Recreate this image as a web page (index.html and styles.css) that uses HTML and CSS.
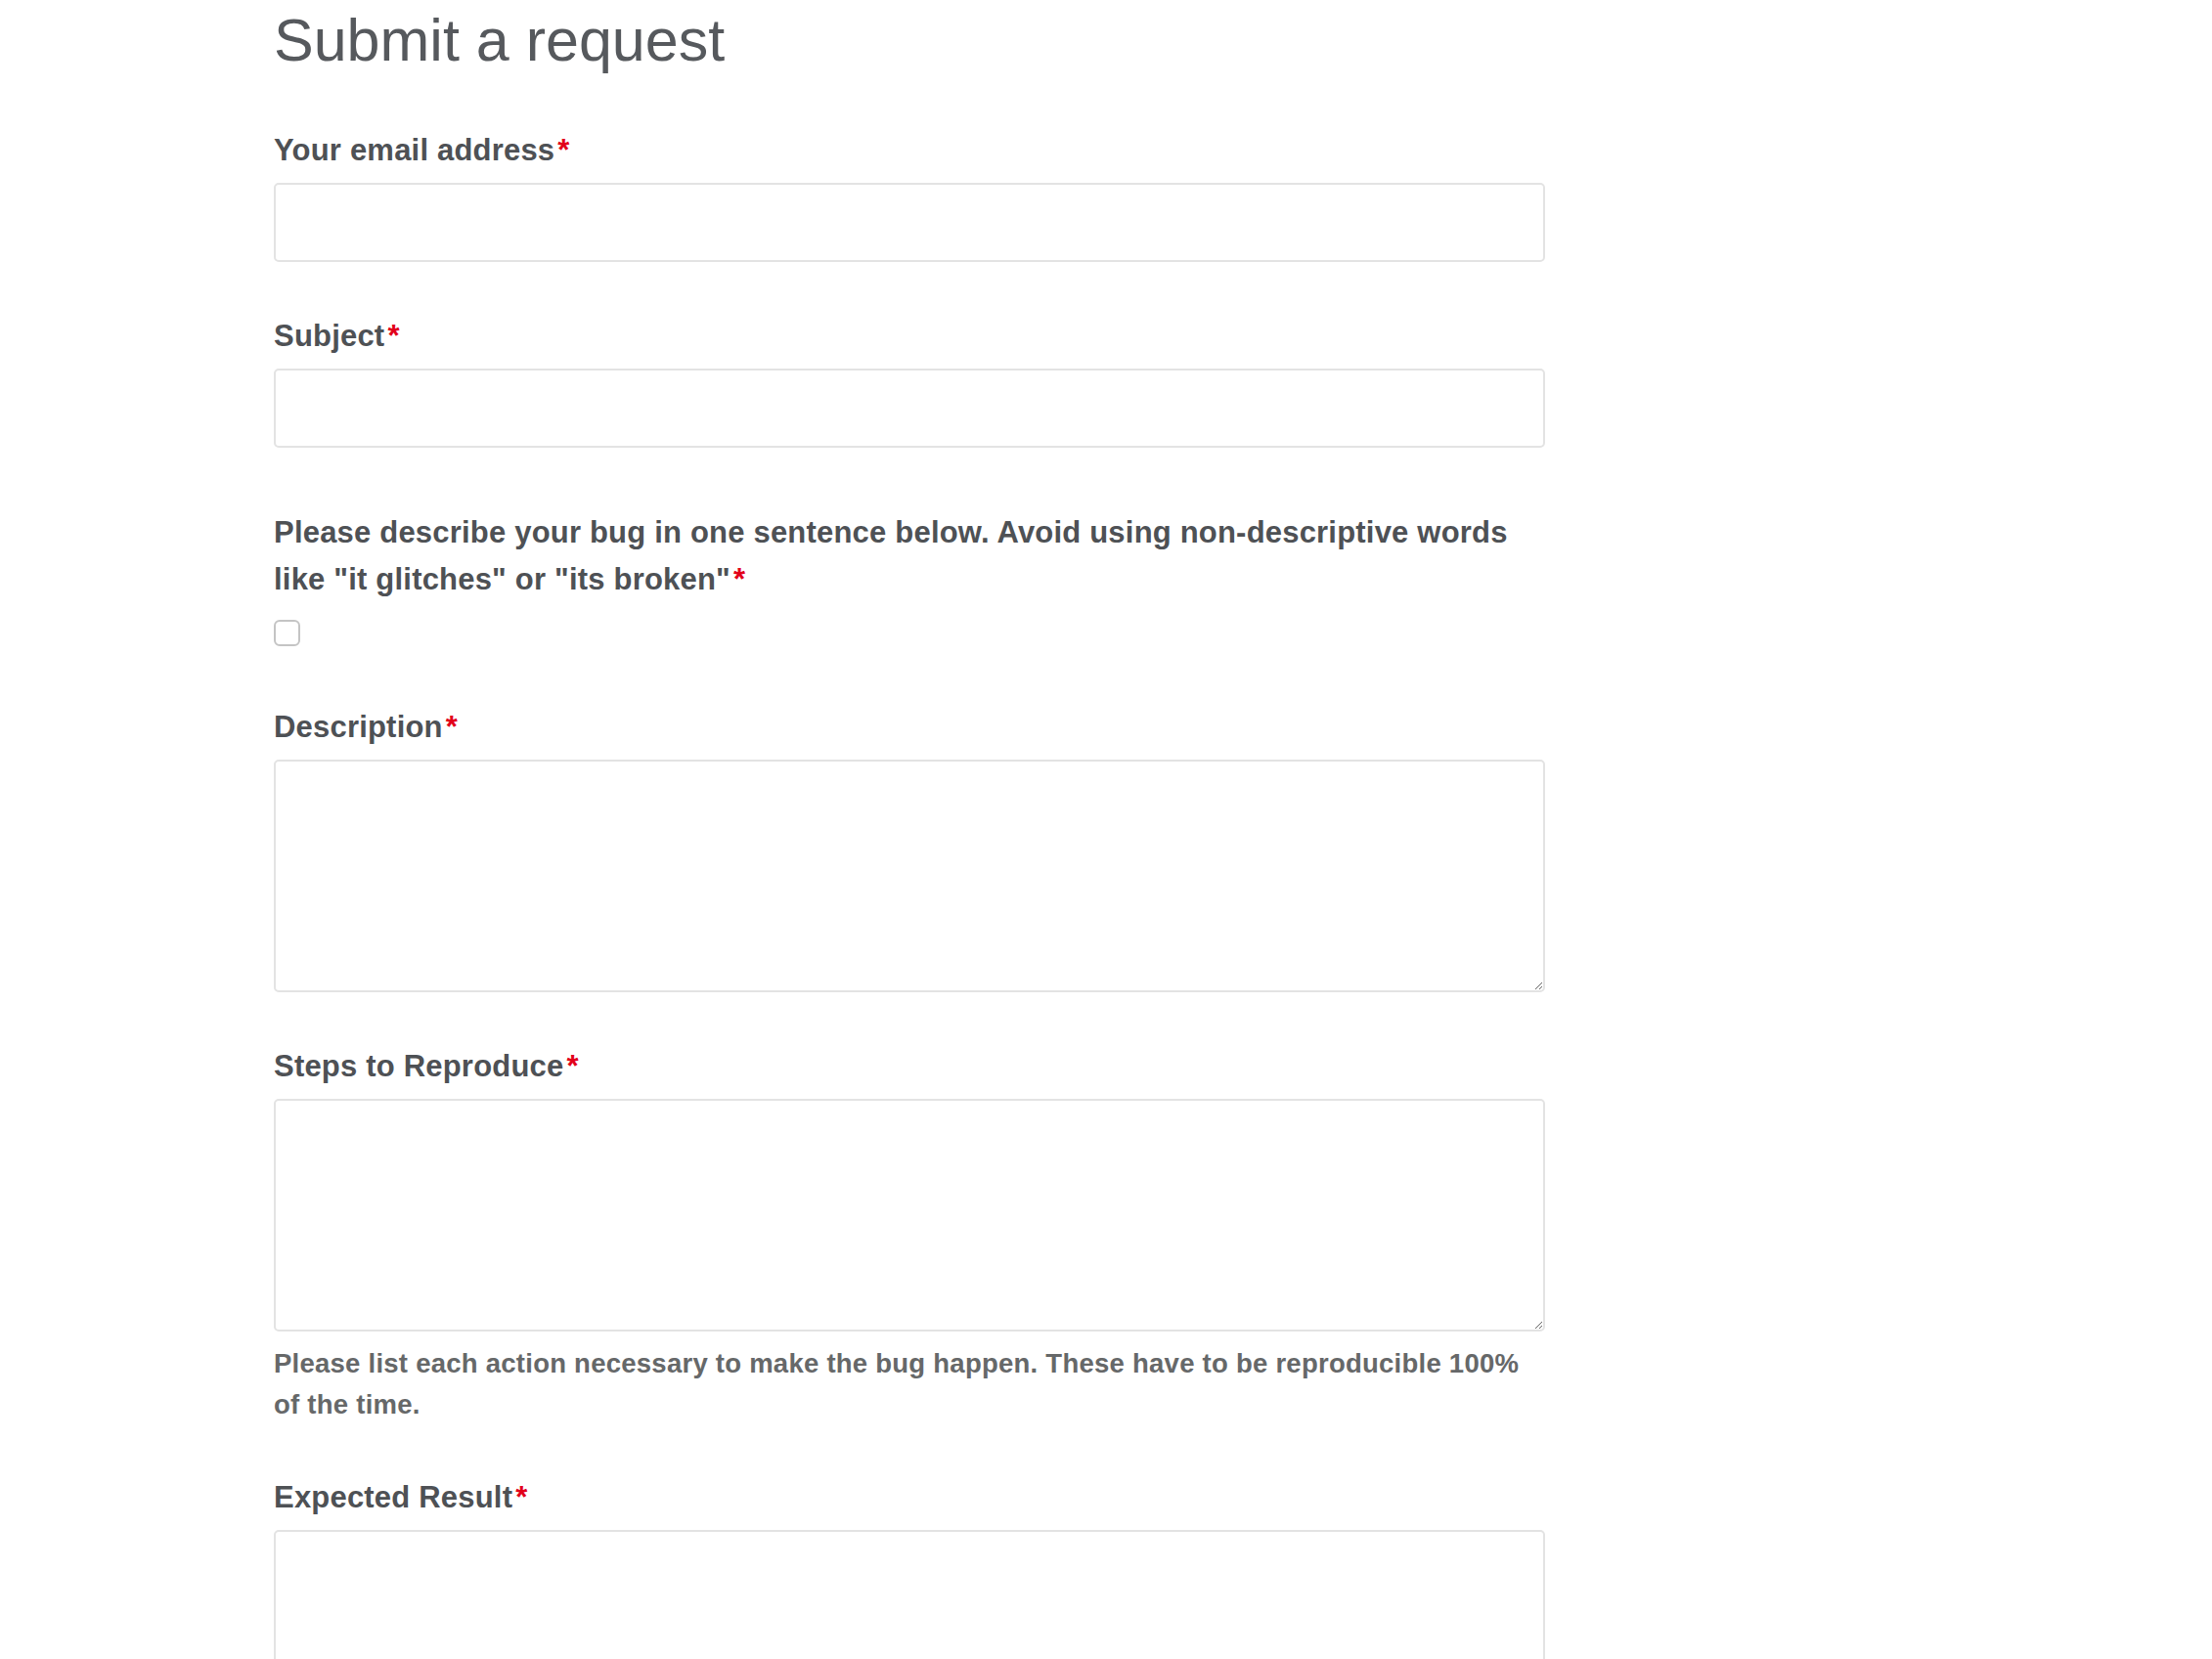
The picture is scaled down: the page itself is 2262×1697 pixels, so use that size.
FILE: index.html
```html
<!DOCTYPE html>
<html lang="en">
<head>
<meta charset="utf-8">
<title>Submit a request</title>
<link rel="stylesheet" href="styles.css">
</head>
<body>
<main class="page">
  <h1 class="title">Submit a request</h1>
  <form class="request-form">
    <div class="field">
      <label class="field-label" for="email">Your email address<span class="req">*</span></label>
      <input class="text-input" id="email" type="email">
    </div>
    <div class="field">
      <label class="field-label" for="subject">Subject<span class="req">*</span></label>
      <input class="text-input" id="subject" type="text">
    </div>
    <div class="field field-check">
      <label class="field-label" for="oneline">Please describe your bug in one sentence below. Avoid using non-descriptive words like "it glitches" or "its broken"<span class="req">*</span></label>
      <input class="check-input" id="oneline" type="checkbox">
    </div>
    <div class="field">
      <label class="field-label" for="description">Description<span class="req">*</span></label>
      <textarea class="text-area" id="description"></textarea>
    </div>
    <div class="field field-help">
      <label class="field-label" for="steps">Steps to Reproduce<span class="req">*</span></label>
      <textarea class="text-area" id="steps"></textarea>
      <p class="help-text">Please list each action necessary to make the bug happen. These have to be reproducible 100% of the time.</p>
    </div>
    <div class="field">
      <label class="field-label" for="expected">Expected Result<span class="req">*</span></label>
      <textarea class="text-area" id="expected"></textarea>
    </div>
  </form>
</main>
</body>
</html>
```
FILE: styles.css
```css
html, body {
  margin: 0;
  padding: 0;
  background: #ffffff;
}

body {
  font-family: "Liberation Sans", Arial, Helvetica, sans-serif;
  color: #4e5155;
}

.page {
  padding: 0 0 0 280px;
  width: 1300px;
}

.title {
  margin: 3px 0 51px;
  font-size: 61px;
  line-height: 76px;
  font-weight: 400;
  color: #56595d;
}

.request-form {
  display: flex;
  flex-direction: column;
}

.field {
  display: flex;
  flex-direction: column;
  margin-bottom: 52px;
}

.field-check {
  margin-top: 11px;
  margin-bottom: 59px;
}

.field-help {
  margin-bottom: 50px;
}

.field-label {
  display: block;
  font-size: 31px;
  letter-spacing: 0.2px;
  line-height: 48px;
  font-weight: 700;
  color: #4e5155;
  margin-bottom: 9px;
}

.req {
  color: #e2001a;
  margin-left: 3px;
}

.text-input {
  box-sizing: border-box;
  width: 1300px;
  height: 81px;
  border: 2px solid #e3e3e3;
  border-radius: 5px;
  background: #ffffff;
  margin: 0;
  padding: 0 16px;
  font: inherit;
  outline: none;
}

.text-area {
  box-sizing: border-box;
  width: 1300px;
  height: 238px;
  border: 2px solid #e3e3e3;
  border-radius: 5px;
  background: #ffffff;
  margin: 0;
  padding: 12px 16px;
  font: inherit;
  outline: none;
  resize: vertical;
  display: block;
}

.check-input {
  appearance: none;
  -webkit-appearance: none;
  box-sizing: border-box;
  width: 27px;
  height: 27px;
  margin: 8px 0 0;
  border: 2px solid #c4c4c4;
  border-radius: 6px;
  background: #ffffff;
  display: block;
}

.help-text {
  margin: 12px 0 0;
  font-size: 27.5px;
  letter-spacing: 0.25px;
  line-height: 42px;
  font-weight: 700;
  color: #666869;
}
```
